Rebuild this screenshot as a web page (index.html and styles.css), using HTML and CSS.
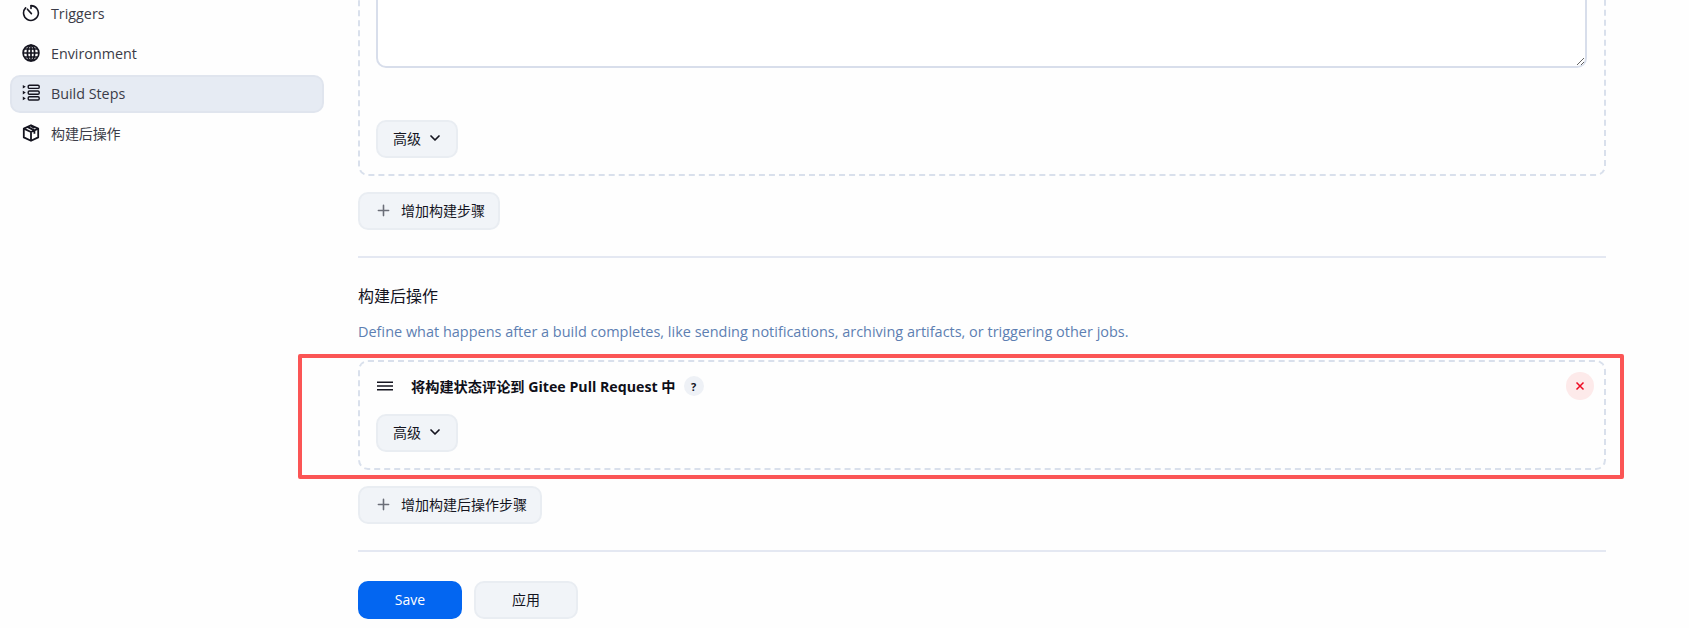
FILE: index.html
```html
<!DOCTYPE html>
<html lang="zh">
<head>
<meta charset="utf-8">
<title>Configure</title>
<link rel="stylesheet" href="styles.css">
</head>
<body>
<div class="page">
  <nav class="side">
    <a class="item">
      <svg class="ic" viewBox="0 0 18 18" fill="none" stroke="#14141f" stroke-width="1.6" stroke-linecap="round"><path d="M9 1.6a7.4 7.4 0 1 1-5.4 2.3"/><path d="M9 1.8v2.6"/><path d="M5.4 5.2 9.4 9.6"/></svg>
      <span>Triggers</span>
    </a>
    <a class="item">
      <svg class="ic" viewBox="0 0 18 18" fill="none" stroke="#14141f" stroke-width="1.7"><circle cx="9" cy="9" r="7.9"/><ellipse cx="9" cy="9" rx="3.6" ry="7.9"/><path d="M9 1.1v15.8M1.1 9h15.8M2.4 5h13.2M2.4 13h13.2"/></svg>
      <span>Environment</span>
    </a>
    <a class="item active">
      <svg class="ic" viewBox="0 0 18 18" fill="none" stroke="#14141f" stroke-width="1.4"><rect x="6.2" y="1.2" width="11" height="3.2" rx="1.2"/><rect x="6.2" y="7" width="11" height="3.2" rx="1.2"/><rect x="6.2" y="12.8" width="11" height="3.2" rx="1.2"/><g fill="#14141f" stroke="none"><path d="M.8 1 3.8 2.8.8 4.6zM.8 6.8 3.8 8.6.8 10.4zM.8 12.6l3 1.8-3 1.8z"/></g></svg>
      <span>Build Steps</span>
    </a>
    <a class="item">
      <svg class="ic" viewBox="0 0 18 18" fill="none" stroke="#14141f" stroke-width="1.8" stroke-linejoin="round"><path d="M9 1.2 16.2 4.6v8.8L9 16.8 1.8 13.4V4.6z"/><path d="M1.8 4.6 9 8l7.2-3.4M9 8v8.8M5.4 2.9l7 3.5v3.4M8.8 2l3.7 2"/></svg>
      <span class="cjk">构建后操作</span>
    </a>
  </nav>

  <main class="main">
    <section class="block first">
      <textarea class="area" aria-label="命令"></textarea>
      <button class="btn adv">高级 <svg class="chev" viewBox="0 0 12 12" fill="none" stroke="#14141f" stroke-width="1.7" stroke-linecap="round" stroke-linejoin="round"><path d="M2 4l4 4 4-4"/></svg></button>
    </section>
    <button class="btn add"><svg class="plus" viewBox="0 0 14 14" fill="none" stroke="#6b6e78" stroke-width="1.7" stroke-linecap="round"><path d="M7 1.5v11M1.5 7h11"/></svg><span>增加构建步骤</span></button>

    <hr class="rule">

    <h2 class="title">构建后操作</h2>
    <p class="desc">Define what happens after a build completes, like sending notifications, archiving artifacts, or triggering other jobs.</p>

    <div class="marked">
      <section class="block second">
        <header class="head">
          <svg class="drag" viewBox="0 0 16 10" fill="none" stroke="#14141f" stroke-width="1.4"><path d="M0 1.2h16M0 5h16M0 8.8h16"/></svg>
          <b class="name">将构建状态评论到 Gitee Pull Request 中</b>
          <span class="help">?</span>
          <span class="close"><svg viewBox="0 0 10 10" fill="none" stroke="#ee0a22" stroke-width="1.5"><path d="M1.5 1.5l7 7M8.5 1.5l-7 7"/></svg></span>
        </header>
        <button class="btn adv">高级 <svg class="chev" viewBox="0 0 12 12" fill="none" stroke="#14141f" stroke-width="1.7" stroke-linecap="round" stroke-linejoin="round"><path d="M2 4l4 4 4-4"/></svg></button>
      </section>
      <div class="redbox"></div>
    </div>

    <button class="btn add"><svg class="plus" viewBox="0 0 14 14" fill="none" stroke="#6b6e78" stroke-width="1.7" stroke-linecap="round"><path d="M7 1.5v11M1.5 7h11"/></svg><span>增加构建后操作步骤</span></button>

    <hr class="rule rule2">

    <div class="actions">
      <button class="btn save">Save</button>
      <button class="btn apply">应用</button>
    </div>
  </main>
</div>
</body>
</html>
```
FILE: styles.css
```css
* { box-sizing: border-box; }
html, body { margin: 0; height: 100%; overflow: hidden; background: #fefefe; }
body { font-family: "Open Sans", "Noto Sans CJK SC", sans-serif; color: #14141f; font-size: 14px; }
.page { display: flex; align-items: flex-start; height: 628px; overflow: hidden; }
.side { width: 324px; padding: 0 0 0 10px; margin-top: -5px; display: flex; flex-direction: column; gap: 2px; flex: none; }
.item { display: flex; align-items: center; height: 38px; gap: 11px; border-radius: 10px; color: #3b3c48; font-size: 14.3px; border: 2px solid transparent; padding: 0 12px 2px 10px; }
.item.active { background: #e6ebf3; border-color: #e0e5ee; }
.ic { width: 18px; height: 18px; flex: none; }
.cjk { font-size: 14px; letter-spacing: -0.1px; }
.main { margin-left: 34px; width: 1248px; flex: none; margin-top: -20px; }
.block { border: 2px dashed #d9e0ec; border-radius: 10px; }
.first { padding: 0 17px 16px 16px; height: 196px; display: flex; flex-direction: column; align-items: flex-start; }
.area { display: block; width: 100%; height: 86px; background: #fff; border: 2px solid #d8deeb; border-radius: 10px; resize: vertical; flex: none; margin-bottom: 52px; outline: none; }
.btn { display: inline-flex; align-items: center; justify-content: center; height: 38px; border: 2px solid #e9edf2; background: #f1f4f8; border-radius: 10px; color: #14141f; font: inherit; font-size: 14px; padding: 0 0 2px; }
.adv { width: 82px; gap: 8px; }
.chev { width: 12px; height: 12px; }
.add { margin-top: 16px; padding: 0 13px 2px 17px; gap: 11px; }
.plus { width: 13px; height: 13px; }
.rule { height: 2px; border: 0; background: #e4e8f2; margin: 26px 0 0; }
.title { font-size: 16px; font-weight: 400; margin: 28px 0 0; line-height: 20px; }
.desc { font-size: 14.47px; color: #5d7fb2; margin: 16px 0 0; line-height: 20px; }
.marked { position: relative; margin-top: 18px; }
.second { height: 110px; padding: 0 16px; position: relative; }
.head { display: flex; align-items: center; height: 48px; margin-bottom: 4px; }
.drag { width: 16px; height: 10px; flex: none; margin-left: 1px; }
.name { margin-left: 18px; font-size: 14.2px; font-weight: 700; color: #0f0f18; }
.help { margin-left: 8px; width: 20px; height: 20px; border-radius: 50%; background: #eef1f6; font-size: 11px; font-weight: 700; display: flex; align-items: center; justify-content: center; }
.close { margin-left: auto; margin-right: -6px; width: 28px; height: 28px; border-radius: 50%; background: #fdeaea; display: flex; align-items: center; justify-content: center; }
.close svg { width: 10px; height: 10px; }
.redbox { position: absolute; left: -60px; right: -18px; top: -6px; bottom: -9px; border: 4px solid #fb5555; border-radius: 2px; pointer-events: none; }
.actions { display: flex; gap: 12px; margin-top: 29px; }
.save, .apply { width: 104px; font-size: 14px; }
.save { background: #0366f1; border-color: #0366f1; color: #fff; font-weight: 500; }
```
